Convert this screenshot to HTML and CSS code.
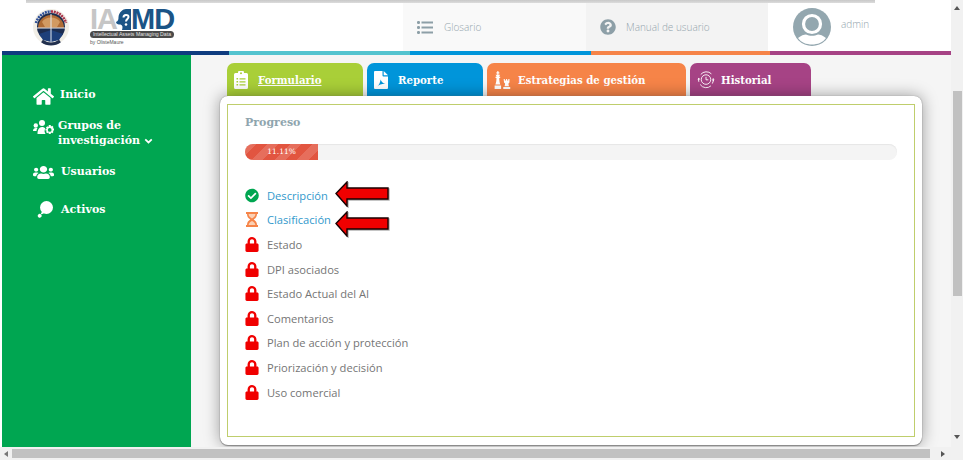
FILE: index.html
```html
<!DOCTYPE html>
<html lang="es">
<head>
<meta charset="utf-8">
<title>IAMD</title>
<link rel="stylesheet" href="styles.css">
</head>
<body>
<svg class="defs" width="0" height="0">
  <symbol id="lock" viewBox="0 0 448 512"><path d="M400 224h-24v-72C376 68.2 307.8 0 224 0S72 68.2 72 152v72H48c-26.5 0-48 21.5-48 48v192c0 26.5 21.5 48 48 48h352c26.5 0 48-21.5 48-48V272c0-26.5-21.5-48-48-48zm-104 0H152v-72c0-39.7 32.3-72 72-72s72 32.3 72 72v72z"/></symbol>
</svg>
<div class="frame">
  <div class="page">
    <div class="strip"></div>
    <header class="header">
      <div class="brand">
        <svg class="seal" viewBox="0 0 36 38">
          <circle cx="18" cy="19" r="18" fill="#f1eee6"/>
          <path d="M3 15A15.500 15.500 0 0 1 18 3.500" fill="none" stroke="#2d4f97" stroke-width="2.600" stroke-dasharray="2 .8"/>
          <path d="M18 3.500A15.500 15.500 0 0 1 33 15" fill="none" stroke="#a8324a" stroke-width="2.600" stroke-dasharray="2 .8"/>
          <circle cx="18" cy="19" r="14" fill="#1c2c4f"/>
          <path d="M5 20a13 13 0 0 1 26 0z" fill="#b06c34"/>
          <path d="M9 14a10 8 0 0 1 18 0l-3 5H12z" fill="#d29a62"/>
          <path d="M6 26l12-4 12 4-4 6-8 2-8-2z" fill="#1d3f7a"/>
          <path d="M18 6v28M4 20h28" stroke="#e4e9f0" stroke-width="1"/>
          <path d="M9 33a15 15 0 0 0 18 0" fill="none" stroke="#22304e" stroke-width="3"/>
        </svg>
        <div class="iamd">
          <div class="iamd-mark"><span class="ia">IA</span><svg class="iamd-head" viewBox="0 0 15 21"><path d="M0 13c2-1 2.500-2 2.500-5C3 3 7 0 10 0h5v21H6c1-3 .5-5-1.500-5.500C2 15.500 0 15 0 13z" fill="#1b5486"/><path d="M7.500 8.500c0-3 5-3.500 5-.5 0 2-2.500 2-2.500 4.500" fill="none" stroke="#fff" stroke-width="2"/><circle cx="10" cy="15.500" r="1.300" fill="#fff"/></svg><span class="md">MD</span></div>
          <div class="iamd-pill">Intellectual Assets Managing Data</div>
          <div class="iamd-by">by OlisteMaure</div>
        </div>
      </div>
      <nav class="top-nav">
        <div class="top-cell cell-glos">
          <svg class="top-icon list-ic" viewBox="0 0 16 13" fill="#8d9fa7"><rect x="0" y="0" width="3" height="3" rx="1.200"/><rect x="0" y="5" width="3" height="3" rx="1.200"/><rect x="0" y="10" width="3" height="3" rx="1.200"/><rect x="4.500" y="0.500" width="11.500" height="2"/><rect x="4.500" y="5.500" width="11.500" height="2"/><rect x="4.500" y="10.500" width="11.500" height="2"/></svg>
          <span>Glosario</span>
        </div>
        <div class="top-cell cell-man">
          <svg class="top-icon q-ic" viewBox="0 0 512 512" fill="#8d9fa7"><path d="M504 256c0 136.997-111.043 248-248 248S8 392.997 8 256C8 119.083 119.043 8 256 8s248 111.083 248 248zM262.655 90c-54.497 0-89.255 22.957-116.549 63.758-3.536 5.286-2.353 12.415 2.715 16.258l34.699 26.31c5.205 3.947 12.621 3.008 16.665-2.122 17.864-22.658 30.113-35.797 57.303-35.797 20.429 0 45.698 13.148 45.698 32.958 0 14.976-12.363 22.667-32.534 33.976C247.128 238.528 216 254.941 216 296v4c0 6.627 5.373 12 12 12h56c6.627 0 12-5.373 12-12v-1.333c0-28.462 83.186-29.647 83.186-106.667 0-58.002-60.165-102-116.531-102zM256 338c-25.365 0-46 20.635-46 46 0 25.364 20.635 46 46 46s46-20.636 46-46c0-25.365-20.635-46-46-46z"/></svg>
          <span>Manual de usuario</span>
        </div>
        <div class="top-cell cell-user">
          <svg class="avatar" viewBox="0 0 38 38"><circle cx="19" cy="19" r="19" fill="#93a7af"/><circle cx="19" cy="16" r="8.500" fill="none" stroke="#fff" stroke-width="3.200"/><path d="M5 30c3-2.500 6-3.500 8-3.500 3.500 1.800 8.500 1.800 12 0 2 0 5 1 8 3.500-3 4.500-8.500 6.500-14 6.500S8 34.500 5 30z" fill="#fff"/></svg>
          <span class="admin">admin</span>
        </div>
      </nav>
    </header>
    <div class="colorbar">
      <i class="c-navy"></i><i class="c-teal"></i><i class="c-blue"></i><i class="c-orange"></i><i class="c-purple"></i>
    </div>
    <div class="body">
      <aside class="sidebar">
        <a class="side-item side-inicio">
          <svg class="ic-home" viewBox="0 0 576 512" fill="#fff"><path d="M280.37 148.26L96 300.11V464a16 16 0 0 0 16 16l112.06-.29a16 16 0 0 0 15.92-16V368a16 16 0 0 1 16-16h64a16 16 0 0 1 16 16v95.64a16 16 0 0 0 16 16.05L464 480a16 16 0 0 0 16-16V300L295.67 148.26a12.19 12.19 0 0 0-15.3 0zM571.6 251.47L488 182.56V44.05a12 12 0 0 0-12-12h-56a12 12 0 0 0-12 12v72.61L318.47 43a48 48 0 0 0-61 0L4.34 251.47a12 12 0 0 0-1.6 16.9l25.5 31A12 12 0 0 0 45.15 301l235.22-193.74a12.19 12.19 0 0 1 15.3 0L530.9 301a12 12 0 0 0 16.9-1.6l25.5-31a12 12 0 0 0-1.7-16.93z"/></svg>
          <span>Inicio</span>
        </a>
        <a class="side-item side-grupos">
          <svg class="ic-groups" viewBox="0 0 21 15" fill="#fff"><circle cx="2.800" cy="5.500" r="2.200"/><circle cx="9" cy="3" r="3"/><path d="M0 11c0-2 1-3 3-3h1.500C3.800 9 3.500 10 3.500 11zM4.500 14c0-4 1.500-7 4.500-7 1.500 0 2.500.5 3.300 1.500-1 1.700-1 3.500.200 5.500z"/><path fill-rule="evenodd" d="M15.800 5h1.900l.3 1.500 1.200-.8 1.300 1.300-.8 1.200 1.300.3v1.900l-1.300.3.800 1.200-1.300 1.300-1.200-.8-.3 1.500h-1.900l-.3-1.500-1.200.8-1.300-1.300.8-1.200-1.300-.3V9l1.300-.3-.8-1.200L14.300 6.200l1.200.8zM16.700 8a1.900 1.900 0 1 0 0 3.800 1.900 1.900 0 0 0 0-3.800z"/></svg>
          <span>Grupos de<br>investigación <svg class="chev" viewBox="0 0 10 7"><path d="M1.200 1.500L5 5.200 8.800 1.500" fill="none" stroke="#fff" stroke-width="2"/></svg></span>
        </a>
        <a class="side-item side-usuarios">
          <svg class="ic-users" viewBox="0 32 640 448" preserveAspectRatio="none" fill="#fff"><path d="M96 224c35.3 0 64-28.7 64-64s-28.7-64-64-64-64 28.7-64 64 28.7 64 64 64zm448 0c35.3 0 64-28.7 64-64s-28.7-64-64-64-64 28.7-64 64 28.7 64 64 64zm32 32h-64c-17.6 0-33.5 7.1-45.1 18.6 40.3 22.1 68.9 62 75.1 109.4h66c17.7 0 32-14.3 32-32v-32c0-35.3-28.7-64-64-64zm-256 0c61.9 0 112-50.1 112-112S381.9 32 320 32 208 82.1 208 144s50.1 112 112 112zm76.8 32h-8.3c-20.8 10-43.9 16-68.5 16s-47.6-6-68.5-16h-8.3C179.6 288 128 339.6 128 403.2V432c0 26.5 21.5 48 48 48h288c26.5 0 48-21.5 48-48v-28.8c0-63.6-51.6-115.2-115.2-115.2zm-223.7-13.4C161.5 263.1 145.6 256 128 256H64c-35.3 0-64 28.7-64 64v32c0 17.7 14.3 32 32 32h65.9c6.3-47.4 34.9-87.3 75.2-109.4z"/></svg>
          <span>Usuarios</span>
        </a>
        <a class="side-item side-activos">
          <svg class="ic-act" viewBox="0 0 16 17" fill="#fff"><circle cx="9.500" cy="6.500" r="6.500"/><path d="M5 10.500l-1.500 3 2.500-.8 1.500-1z"/><path d="M1.300 13.500a1.900 1.900 0 1 0 2.800 2.600 1.900 1.900 0 0 0-2.800-2.600z"/></svg>
          <span>Activos</span>
        </a>
      </aside>
      <main class="main">
        <div class="tabs">
          <a class="tab tab-form">
            <svg class="tab-ic ic-clip" viewBox="0 0 14 18" fill="#fff"><path fill-rule="evenodd" d="M1.500 2H4a3 3 0 0 1 6 0h2.500A1.500 1.500 0 0 1 14 3.500v13a1.500 1.500 0 0 1-1.500 1.500h-11A1.500 1.500 0 0 1 0 16.500v-13A1.500 1.500 0 0 1 1.500 2zM7 1.300a1 1 0 1 0 0 2 1 1 0 0 0 0-2zM2.500 7v1.600h1.600V7zm3 .2v1.200h6V7.200zm-3 2.800v1.600h1.600V10zm3 .2v1.200h6v-1.200zm-3 2.800v1.600h1.600V13zm3 .2v1.200h6v-1.200z"/></svg>
            <span class="under">Formulario</span>
          </a>
          <a class="tab tab-rep">
            <svg class="tab-ic ic-pdf" viewBox="0 0 14 18" fill="#fff"><path fill-rule="evenodd" d="M0 1a1 1 0 0 1 1-1h7.500v4.500a1 1 0 0 0 1 1H14V17a1 1 0 0 1-1 1H1a1 1 0 0 1-1-1zM2.500 16c2.200-1.200 3.500-3.800 4.200-7.500.6 2.300 2 3.700 4.800 4.300-3.300-.2-6.300.7-9 3.200z"/><path d="M9.700 0L14 4.300H9.700z"/></svg>
            <span>Reporte</span>
          </a>
          <a class="tab tab-est">
            <svg class="tab-ic ic-chess" viewBox="0 0 22 18" preserveAspectRatio="none" fill="#fff"><path d="M4.300 0h1.400v1.200h1.200v1.300H5.700v1.200H8L6.800 5.200v.6H8v1.300H6.800c0 2.500.4 4.500 1.400 6.300H1.800c1-1.800 1.400-3.800 1.400-6.300H2V5.800h1.200v-.6L2 3.700h2.300V2.500H3.100V1.200h1.200zM.8 14.500h8.400V18H.8zM12.500 8h1.500v1.500h1.500V8h1.500v1.500h1.500V8H20v3.500l-1.300 1c0 1.200.2 2 .8 2.800h-6c.6-.8.800-1.600.8-2.800l-1.300-1zM12 16h9v2h-9z"/></svg>
            <span>Estrategias de gestión</span>
          </a>
          <a class="tab tab-his">
            <svg class="tab-ic ic-hist" viewBox="0 0 20 20" fill="none" stroke="#fff" stroke-width="1"><circle cx="10" cy="9.500" r="5.300"/><path d="M10 6.500v3.300h2.600"/><path d="M4.200 3.800A8 8 0 0 1 16 3.200M18 8a8 8 0 0 1-1 6M15.500 16.500A8 8 0 0 1 3.500 15M2 12a8 8 0 0 1 0-4"/><path d="M0.500 9.500L2 7.500l1.500 2M16.500 9.500L18 11.500l1.500-2" fill="#fff" stroke="none"/></svg>
            <span>Historial</span>
          </a>
        </div>
        <section class="card">
          <div class="inner">
            <h2 class="title">Progreso</h2>
            <div class="progress"><div class="progress-fill">11.11%</div></div>
            <ul class="steps">
              <li class="step done"><svg class="st-ic" viewBox="0 0 512 512" fill="#00a651"><path d="M504 256c0 136.967-111.033 248-248 248S8 392.967 8 256 119.033 8 256 8s248 111.033 248 248zM227.314 387.314l184-184c6.248-6.248 6.248-16.379 0-22.627l-22.627-22.627c-6.248-6.249-16.379-6.25-22.628 0L216 308.118l-70.059-70.059c-6.248-6.248-16.379-6.248-22.628 0l-22.627 22.627c-6.248 6.248-6.248 16.379 0 22.627l104 104c6.249 6.249 16.379 6.249 22.628.001z"/></svg><span>Descripción</span></li>
              <li class="step done"><svg class="st-ic" viewBox="0 0 14 15"><path d="M1 0h12v2h-1c0 3-1.500 4.300-3.300 5.500C10.500 8.700 12 10 12 13h1v2H1v-2h1c0-3 1.500-4.300 3.300-5.500C3.500 6.300 2 5 2 2H1z" fill="#f68448"/><path d="M3.600 2c.1 2.100 1.200 3.300 3.400 4.500C9.200 5.300 10.300 4.100 10.400 2zM7 9c-2 1-3.200 2.200-3.400 4h6.800C10.200 11.200 9 10 7 9z" fill="#fbd0b4"/></svg><span>Clasificación</span></li>
              <li class="step"><svg class="st-ic lock" fill="#f00000"><use href="#lock"/></svg><span>Estado</span></li>
              <li class="step"><svg class="st-ic lock" fill="#f00000"><use href="#lock"/></svg><span>DPI asociados</span></li>
              <li class="step"><svg class="st-ic lock" fill="#f00000"><use href="#lock"/></svg><span>Estado Actual del AI</span></li>
              <li class="step"><svg class="st-ic lock" fill="#f00000"><use href="#lock"/></svg><span>Comentarios</span></li>
              <li class="step"><svg class="st-ic lock" fill="#f00000"><use href="#lock"/></svg><span>Plan de acción y protección</span></li>
              <li class="step"><svg class="st-ic lock" fill="#f00000"><use href="#lock"/></svg><span>Priorización y decisión</span></li>
              <li class="step"><svg class="st-ic lock" fill="#f00000"><use href="#lock"/></svg><span>Uso comercial</span></li>
            </ul>
          </div>
          <svg class="arrow arrow-1" viewBox="0 0 54 26"><path d="M1 12.500L12 1v6h41v11H12v7z" fill="#f00000" stroke="#1a0000" stroke-width="1.400"/></svg>
          <svg class="arrow arrow-2" viewBox="0 0 54 26"><path d="M1 12.500L12 1v6h41v11H12v7z" fill="#f00000" stroke="#1a0000" stroke-width="1.400"/></svg>
        </section>
      </main>
    </div>
  </div>
  <div class="vbar">
    <span class="tri tri-up"></span>
    <div class="vthumb"></div>
    <span class="tri tri-down"></span>
  </div>
  <div class="hbar">
    <span class="tri tri-left"></span>
    <div class="hthumb"></div>
    <span class="tri tri-right"></span>
  </div>
  <div class="corner"></div>
</div>
</body>
</html>
```
FILE: styles.css
```css
* { box-sizing: border-box; }
html, body { margin: 0; padding: 0; width: 963px; height: 460px; overflow: hidden; background: #fff; }
body { font-family: "Open Sans", sans-serif; }
.defs { position: absolute; }
a { color: inherit; text-decoration: none; }

.frame {
  width: 963px;
  height: 460px;
  display: grid;
  grid-template-columns: 951px 12px;
  grid-template-rows: 447px 13px;
}
.page { display: flex; flex-direction: column; padding-left: 2px; background: #fff; overflow: hidden; }
.strip { height: 3px; margin-left: 24px; margin-right: 76px; background: linear-gradient(#c8c8c8, #dcdcdc); flex: none; }

.header { height: 48px; display: flex; flex: none; background: #fff; }
.brand { width: 401px; display: flex; align-items: flex-start; padding: 5px 0 0 31px; }
.seal { width: 36px; height: 38px; flex: none; }
.iamd { margin: 1px 0 0 21px; width: 84px; display: flex; flex-direction: column; }
.iamd-mark { display: flex; align-items: center; height: 21px; font-family: "Liberation Sans", sans-serif; font-weight: 700; font-size: 29px; line-height: 21px; letter-spacing: -1px; }
.ia { color: #c6c6c6; width: 26px; flex: none; }
.iamd-head { width: 15px; height: 21px; flex: none; }
.md { color: #1b5486; }
.iamd-pill { height: 7px; margin-top: 1px; border-radius: 3.500px; background: #4a4a4a; color: #e2e2e2; font-family: "Liberation Sans", sans-serif; font-size: 5.200px; line-height: 7px; text-align: center; white-space: nowrap; }
.iamd-by { font-family: "Liberation Sans", sans-serif; font-size: 5px; line-height: 8px; color: #555; }

.top-nav { flex: 1; display: flex; color: #93a5ad; font-size: 10px; font-weight: 300; }
.top-cell { display: flex; align-items: center; }
.cell-glos { width: 183px; background: #f9f9f9; padding-left: 14px; }
.cell-man { width: 182px; background: #f3f3f3; padding-left: 14px; }
.cell-user { flex: 1; background: #fff; padding-left: 25px; align-items: flex-start; }
.top-icon { flex: none; }
.list-ic { width: 16px; height: 13px; margin-right: 11px; }
.q-ic { width: 16px; height: 16px; margin-right: 10px; }
.avatar { width: 38px; height: 38px; margin-top: 5px; flex: none; }
.admin { margin: 14px 0 0 10px; }

.colorbar { height: 4px; display: flex; flex: none; }
.colorbar i { display: block; height: 4px; }
.c-navy { width: 227px; background: #0f3c7f; }
.c-teal { width: 181px; background: #53c3cf; }
.c-blue { width: 181px; background: #0095da; }
.c-orange { width: 179px; background: #f68448; }
.c-purple { flex: 1; background: #a64385; }

.body { flex: 1; display: flex; min-height: 0; background: #f5f5f5; }
.sidebar { width: 189px; flex: none; background: #00a651; color: #fff; font-family: "DejaVu Serif", serif; font-weight: 700; font-size: 11px; padding-top: 32px; display: flex; flex-direction: column; }
.side-item { display: flex; align-items: center; padding-left: 31px; }
.side-item span { white-space: nowrap; }
.side-inicio { height: 18px; }
.side-inicio span { padding-bottom: 4px; }
.ic-home { width: 21px; height: 19px; margin-right: 6px; flex: none; }
.side-grupos { margin-top: 12px; height: 32px; align-items: center; }
.ic-groups { width: 21px; height: 15px; margin: -12px 4px 0 0; flex: none; }
.side-grupos span { line-height: 15px; }
.chev { width: 9px; height: 6px; }
.side-usuarios { margin-top: 14px; height: 16px; }
.ic-users { width: 21px; height: 13px; margin: 3px 7px 0 0; flex: none; }
.side-activos { margin-top: 21px; height: 18px; padding-left: 35px; }
.ic-act { width: 16px; height: 17px; margin-right: 8px; flex: none; }

.main { flex: 1; min-width: 0; display: flex; flex-direction: column; padding-top: 8px; }
.tabs { display: flex; gap: 4px; margin-left: 36px; height: 33px; flex: none; }
.tab { display: flex; align-items: center; padding: 0 0 0 7px; height: 33px; border-radius: 7px 7px 0 0; color: #fff; font-family: "DejaVu Serif", serif; font-weight: 700; font-size: 10.200px; white-space: nowrap; }
.tab-form { width: 136px; background: #a9cf38; }
.tab-rep { width: 116px; background: #0095da; }
.tab-est { width: 199px; background: #f68448; }
.tab-his { width: 121px; background: #a64385; }
.under { text-decoration: underline; }
.tab-ic { flex: none; }
.ic-clip { width: 14px; height: 18px; margin-right: 10px; }
.ic-pdf { width: 14px; height: 18px; margin-right: 10px; }
.ic-chess { width: 17px; height: 18px; margin-right: 7px; }
.ic-hist { width: 18px; height: 18px; margin-right: 6px; }

.card { position: relative; margin-left: 29px; width: 702px; height: 349px; padding: 8px 7px; background: #fff; border-radius: 8px; box-shadow: 0 0 1px 0 #777, 0 1px 1px #888, 0 0 16px rgba(0,0,0,.38); z-index: 1; flex: none; }
.inner { height: 333px; border: 1px solid #bfce6c; padding: 10px 17px 0 17px; }
.title { margin: 0; font-family: "DejaVu Serif", serif; font-weight: 700; font-size: 11px; line-height: 15px; color: #8fa5ae; }
.progress { margin-top: 14px; height: 16px; border-radius: 8px; background: #f4f4f4; overflow: hidden; box-shadow: inset 0 1px 1px #e6e6e6; }
.progress-fill { width: 11.200%; height: 16px; color: #fff; font-family: "DejaVu Serif", serif; font-size: 7.500px; line-height: 16px; text-align: center; background-color: #e25540; background-image: repeating-linear-gradient(135deg, rgba(255,255,255,.15) 0 8px, transparent 8px 16px); }
.steps { list-style: none; margin: 23px 0 0; padding: 0; font-size: 11.150px; color: #757575; }
.step { display: flex; align-items: center; height: 24.600px; }
.step.done { color: #3199cc; }
.st-ic { width: 14px; height: 15px; margin-right: 8px; flex: none; }

.arrow { position: absolute; width: 54px; height: 26px; }
.arrow-1 { left: 115px; top: 85px; filter: drop-shadow(1px 1px 0 rgba(0,0,0,.3)); }
.arrow-2 { left: 115px; top: 115px; filter: drop-shadow(1px 1px 0 rgba(0,0,0,.3)); }

.vbar { grid-column: 2; grid-row: 1; background: #f1f1f1; display: flex; flex-direction: column; align-items: center; padding-top: 6px; }
.vthumb { width: 9px; height: 205px; margin-top: 81px; background: #c1c1c1; }
.hbar { grid-column: 1; grid-row: 2; background: #f1f1f1; display: flex; align-items: center; padding-left: 4px; }
.hthumb { width: 918px; height: 9px; margin-left: 4px; background: #c1c1c1; }
.corner { background: #f1f1f1; }
.tri { width: 0; height: 0; border-style: solid; flex: none; }
.tri-up { border-width: 0 3px 4px; border-color: transparent transparent #555; }
.tri-down { border-width: 4px 3px 0; border-color: #555 transparent transparent; margin-top: 139px; }
.tri-left { border-width: 3px 4px 3px 0; border-color: transparent #777 transparent transparent; }
.tri-right { border-width: 3px 0 3px 4px; border-color: transparent transparent transparent #555; margin-left: 11px; }
```
